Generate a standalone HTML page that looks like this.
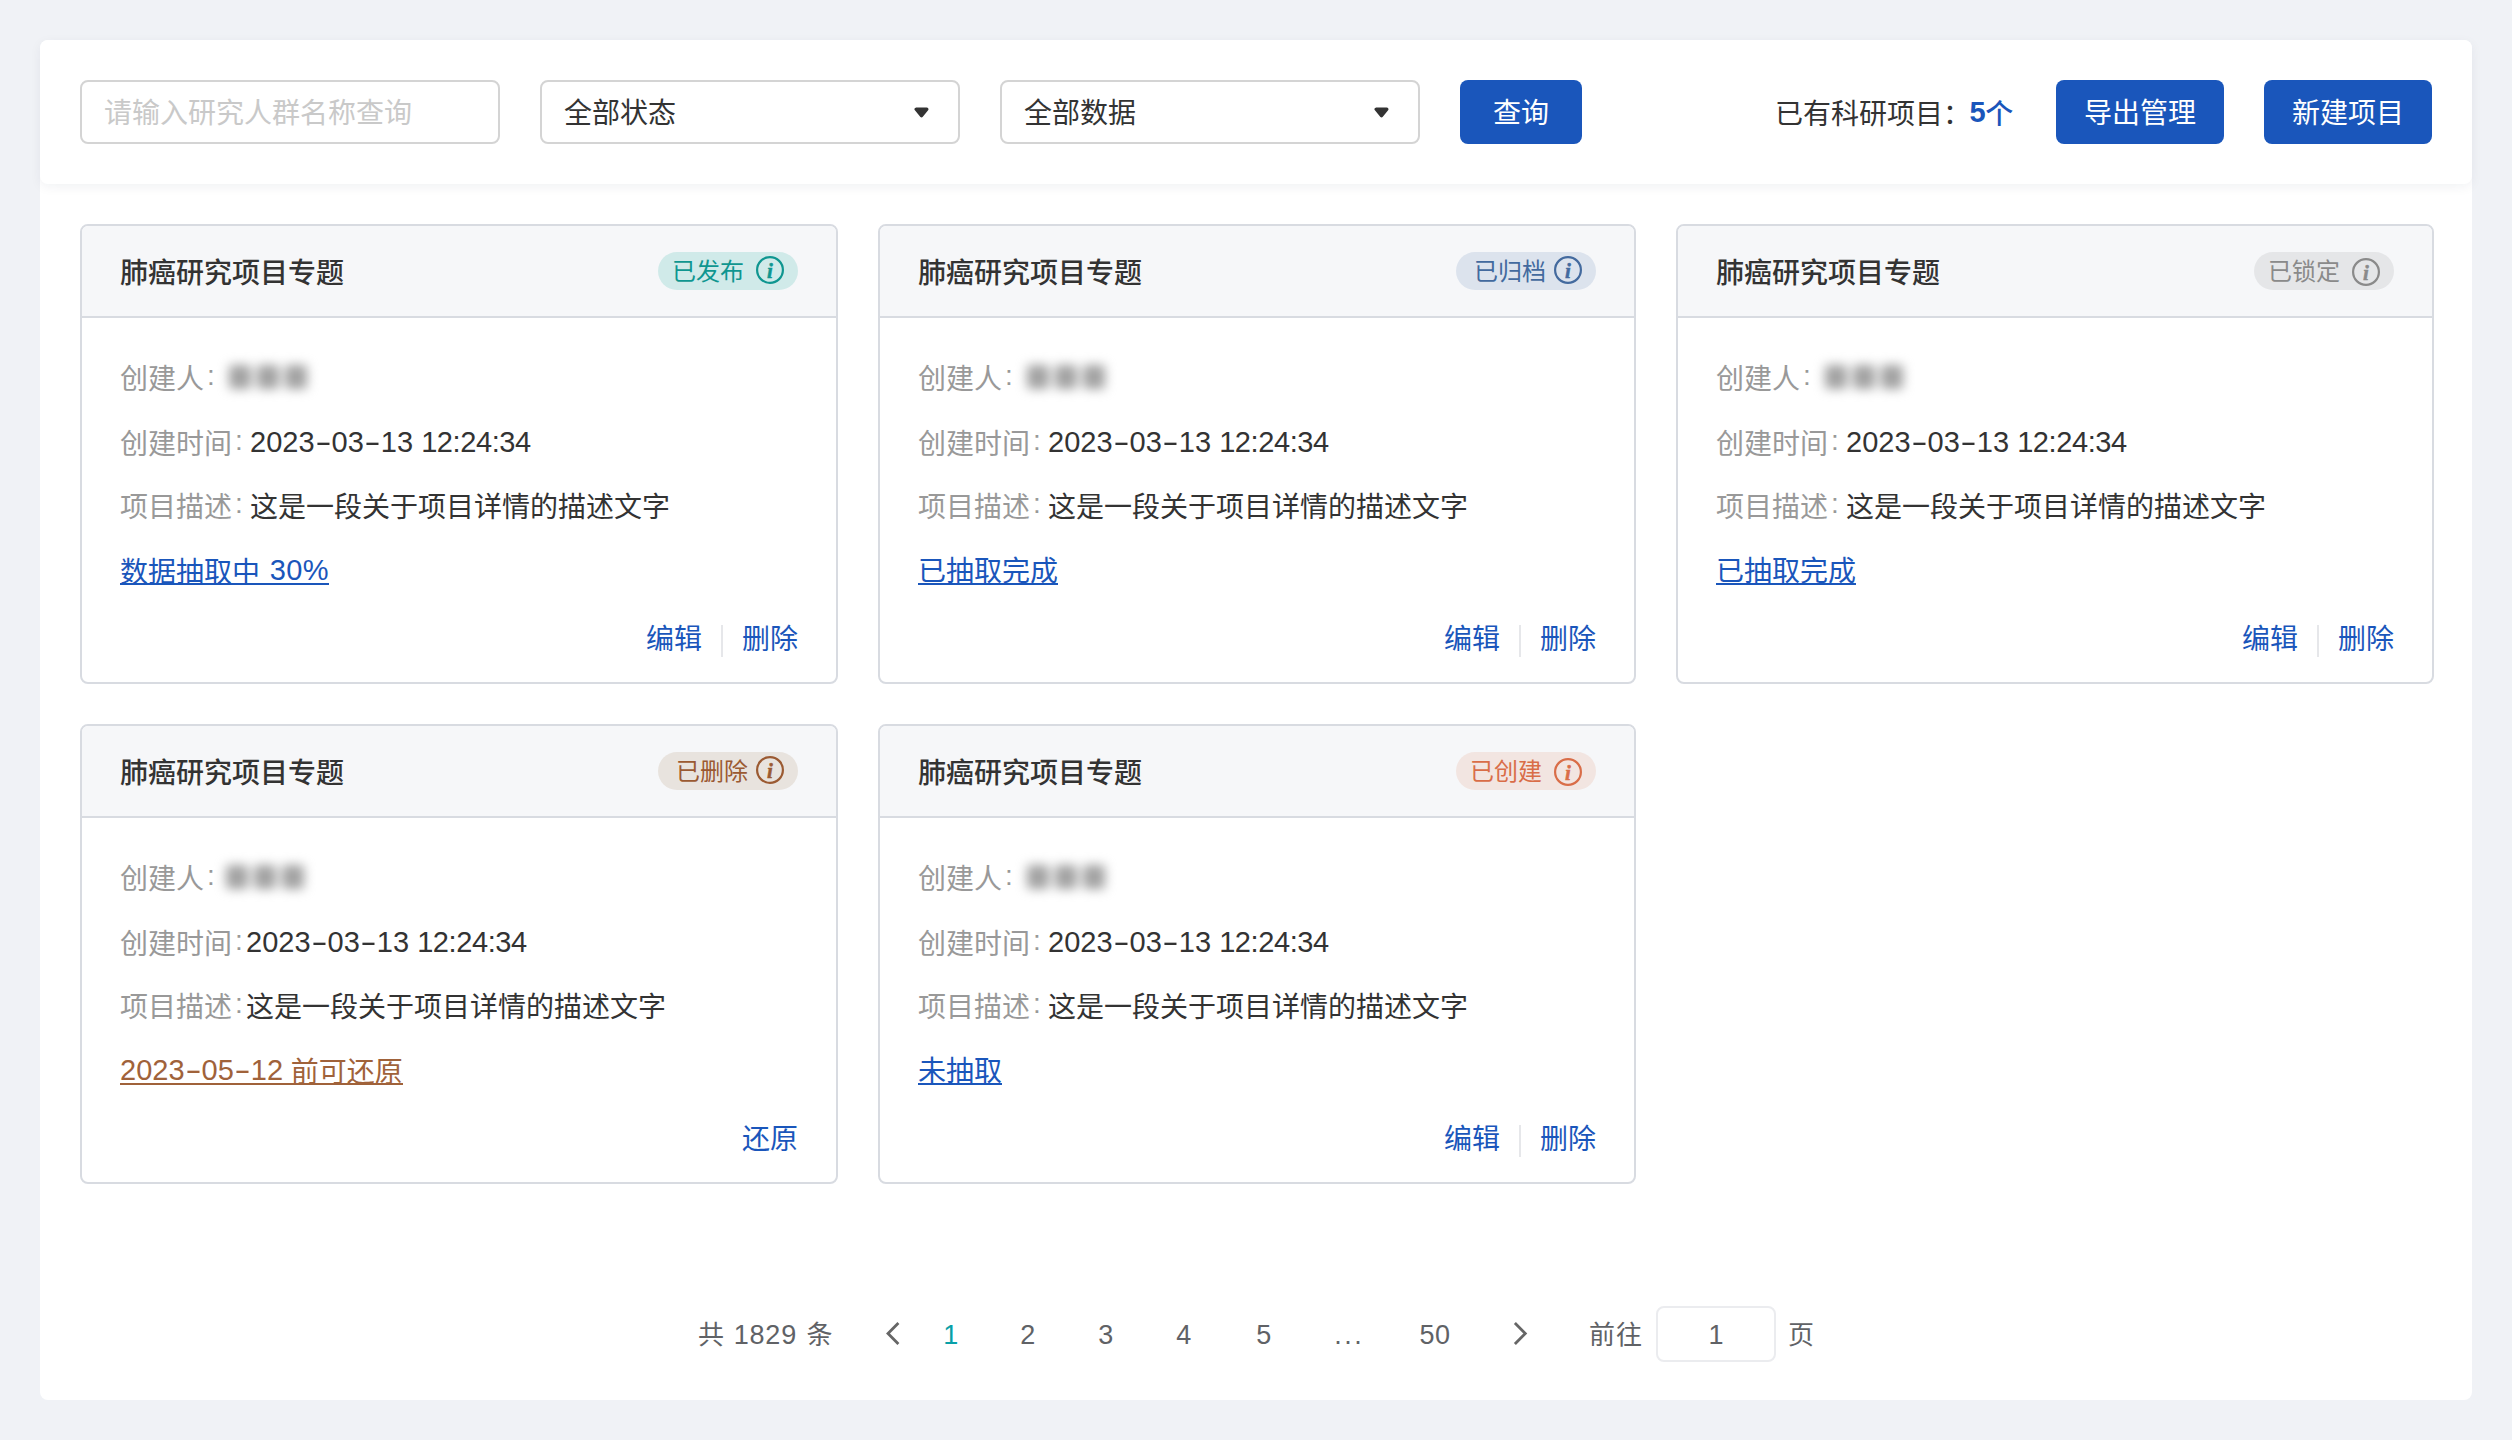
<!DOCTYPE html>
<html lang="zh-CN">
<head>
<meta charset="utf-8">
<title>科研项目</title>
<style>
*{box-sizing:border-box;margin:0;padding:0}
html,body{width:2512px;height:1440px;overflow:hidden}
body{background:#f0f2f6;font-family:"Liberation Sans","Noto Sans CJK SC",sans-serif;font-size:28px;color:#333;position:relative;-webkit-font-smoothing:antialiased}
.panel{position:absolute;left:40px;top:40px;width:2432px;height:1360px;background:#fff;border-radius:8px}
.toolbar{position:absolute;left:40px;top:40px;width:2432px;height:144px;background:#fff;border-radius:8px;box-shadow:0 3px 12px rgba(20,30,60,.06)}
.inp{position:absolute;top:80px;height:64px;width:420px;border:2px solid #d4d4d4;border-radius:8px;background:#fff;line-height:64px;padding-left:22px;font-size:28px;color:#333;white-space:nowrap}
.inp.ph{color:#c9c9c9}
.inp .arr{position:absolute;left:372px;top:25px;width:15px;height:11px}
.btn{position:absolute;top:80px;height:64px;background:#1a56bb;color:#fff;border-radius:8px;font-size:28px;line-height:68px;text-align:center;white-space:nowrap}
.count{position:absolute;top:80px;height:64px;line-height:68px;left:1775px;font-size:28px;color:#333;white-space:nowrap}
.count b{font-weight:500;color:#1a56bb}
.card{position:absolute;width:758px;height:460px;border:2px solid #d8dbe1;border-radius:8px;background:#fff;overflow:hidden}
.card .hd{position:absolute;left:0;top:0;right:0;height:92px;background:#f6f7f9;border-bottom:2px solid #d8dbe1}
.card .tt{position:absolute;left:38px;top:0;height:90px;line-height:96px;font-size:28px;font-weight:500;color:#333;white-space:nowrap}
.badge{position:absolute;right:38px;top:26px;height:38px;width:140px;border-radius:19px;font-size:24px;line-height:40px;padding-left:14px;white-space:nowrap}
.badge svg{position:absolute;right:14px;top:4px;width:28px;height:28px}
.row{position:absolute;left:38px;height:40px;line-height:40px;font-size:28px;white-space:nowrap;color:#333}
.row .lb{color:#999}
.row .lb b{font-weight:400;display:inline-block;width:18px;text-align:left;padding-left:3px;position:relative;top:-4px}
.c4 .row .lb b{width:14px}
.num{font-size:29px;letter-spacing:0;position:relative;top:-2.5px}
.hy{display:inline-block;width:17px;text-align:center;transform:scaleX(1.7);letter-spacing:0}
.r1{top:134px}.r2{top:198px}.r3{top:262px}.r4{top:326px}
.lnk{display:inline-block;height:33px;line-height:40px;color:#1a56bb;border-bottom:2px solid currentColor}
.blur{position:absolute;left:106px;top:3.3px;width:84px;height:28px;filter:blur(5.5px)}
.blur i{position:absolute;top:2px;width:22px;height:24px;background:#a2a2a2;border-radius:3px}
.c4 .blur{left:103px}
.acts{position:absolute;right:38px;top:394px;height:40px;line-height:40px;font-size:28px;color:#1a56bb;white-space:nowrap}
.acts i{display:inline-block;width:2px;height:32px;background:#e6e7ea;vertical-align:middle;margin:0 19px 0 19px;position:relative;top:-1px}
.pg{position:absolute;top:1306px;height:56px;line-height:58px;font-size:26px;color:#606266;white-space:nowrap}
.pc{width:80px;text-align:center;font-size:27px;letter-spacing:.5px}
.pn{font-size:27px;letter-spacing:.8px;margin:0 2.2px 0 2.5px}
.pgin{position:absolute;left:1656px;top:1306px;width:120px;height:56px;border:2px solid #ebecef;border-radius:8px;line-height:54px;text-align:center;font-size:27px;color:#606266}
</style>
</head>
<body>
<div class="panel"></div>
<div class="toolbar"></div>
<div class="inp ph" style="left:80px">请输入研究人群名称查询</div>
<div class="inp" style="left:540px">全部状态<svg class="arr" viewBox="0 0 15 11"><path d="M2.2 2.2 L12.8 2.2 L7.5 8.6 Z" fill="#333" stroke="#333" stroke-width="3.4" stroke-linejoin="round"/></svg></div>
<div class="inp" style="left:1000px">全部数据<svg class="arr" viewBox="0 0 15 11"><path d="M2.2 2.2 L12.8 2.2 L7.5 8.6 Z" fill="#333" stroke="#333" stroke-width="3.4" stroke-linejoin="round"/></svg></div>
<div class="btn" style="left:1460px;width:122px">查询</div>
<div class="count">已有科研项目：<b><span style="font-weight:700;font-size:29px;position:relative;top:-2px;margin-left:-1.5px;letter-spacing:-.5px">5</span>个</b></div>
<div class="btn" style="left:2056px;width:168px">导出管理</div>
<div class="btn" style="left:2264px;width:168px">新建项目</div>

<div class="card" style="left:80px;top:224px">
<div class="hd"><div class="tt">肺癌研究项目专题</div>
<div class="badge" style="color:#0f9690;background:#d0eae9">已发布<svg viewBox="0 0 28 28"><circle cx="14" cy="14" r="12.9" fill="none" stroke="#0f9690" stroke-width="2.2"/><text x="14" y="21.8" text-anchor="middle" font-family="Liberation Serif, serif" font-style="italic" font-weight="bold" font-size="21" stroke-width=".5" stroke="currentColor" fill="#0f9690">i</text></svg></div></div>
<div class="row r1"><span class="lb">创建人<b>:</b></span><span class="blur"><i style="left:3px"></i><i style="left:31px"></i><i style="left:59px"></i></span></div>
<div class="row r2"><span class="lb">创建时间<b>:</b></span><span class="v num">2023<span class="hy">-</span>03<span class="hy">-</span>13 <span style="letter-spacing:-.4px">12:24:34</span></span></div>
<div class="row r3"><span class="lb">项目描述<b>:</b></span><span class="v">这是一段关于项目详情的描述文字</span></div>
<div class="row r4"><span class="lnk">数据抽取中 <span class="num" style="letter-spacing:.4px;margin-left:2px">30%</span></span></div>
<div class="acts">编辑<i></i>删除</div>
</div>
<div class="card" style="left:878px;top:224px">
<div class="hd"><div class="tt">肺癌研究项目专题</div>
<div class="badge" style="color:#436a9e;background:#dce3ed;padding-left:18px">已归档<svg viewBox="0 0 28 28"><circle cx="14" cy="14" r="12.9" fill="none" stroke="#436a9e" stroke-width="2.2"/><text x="14" y="21.8" text-anchor="middle" font-family="Liberation Serif, serif" font-style="italic" font-weight="bold" font-size="21" stroke-width=".5" stroke="currentColor" fill="#436a9e">i</text></svg></div></div>
<div class="row r1"><span class="lb">创建人<b>:</b></span><span class="blur"><i style="left:3px"></i><i style="left:31px"></i><i style="left:59px"></i></span></div>
<div class="row r2"><span class="lb">创建时间<b>:</b></span><span class="v num">2023<span class="hy">-</span>03<span class="hy">-</span>13 <span style="letter-spacing:-.4px">12:24:34</span></span></div>
<div class="row r3"><span class="lb">项目描述<b>:</b></span><span class="v">这是一段关于项目详情的描述文字</span></div>
<div class="row r4"><span class="lnk">已抽取完成</span></div>
<div class="acts">编辑<i></i>删除</div>
</div>
<div class="card" style="left:1676px;top:224px">
<div class="hd"><div class="tt">肺癌研究项目专题</div>
<div class="badge" style="color:#8a8a8a;background:#e5e6e8">已锁定<svg style="top:6px" viewBox="0 0 28 28"><circle cx="14" cy="14" r="12.9" fill="none" stroke="#8a8a8a" stroke-width="2.2"/><text x="14" y="21.8" text-anchor="middle" font-family="Liberation Serif, serif" font-style="italic" font-weight="bold" font-size="21" stroke-width=".5" stroke="currentColor" fill="#8a8a8a">i</text></svg></div></div>
<div class="row r1"><span class="lb">创建人<b>:</b></span><span class="blur"><i style="left:3px"></i><i style="left:31px"></i><i style="left:59px"></i></span></div>
<div class="row r2"><span class="lb">创建时间<b>:</b></span><span class="v num">2023<span class="hy">-</span>03<span class="hy">-</span>13 <span style="letter-spacing:-.4px">12:24:34</span></span></div>
<div class="row r3"><span class="lb">项目描述<b>:</b></span><span class="v">这是一段关于项目详情的描述文字</span></div>
<div class="row r4"><span class="lnk">已抽取完成</span></div>
<div class="acts">编辑<i></i>删除</div>
</div>
<div class="card c4" style="left:80px;top:724px">
<div class="hd"><div class="tt">肺癌研究项目专题</div>
<div class="badge" style="color:#9b5a32;background:#e8e3de;padding-left:18px">已删除<svg viewBox="0 0 28 28"><circle cx="14" cy="14" r="12.9" fill="none" stroke="#9b5a32" stroke-width="2.2"/><text x="14" y="21.8" text-anchor="middle" font-family="Liberation Serif, serif" font-style="italic" font-weight="bold" font-size="21" stroke-width=".5" stroke="currentColor" fill="#9b5a32">i</text></svg></div></div>
<div class="row r1"><span class="lb">创建人<b>:</b></span><span class="blur"><i style="left:3px"></i><i style="left:31px"></i><i style="left:59px"></i></span></div>
<div class="row r2"><span class="lb">创建时间<b>:</b></span><span class="v num">2023<span class="hy">-</span>03<span class="hy">-</span>13 <span style="letter-spacing:-.4px">12:24:34</span></span></div>
<div class="row r3"><span class="lb">项目描述<b>:</b></span><span class="v">这是一段关于项目详情的描述文字</span></div>
<div class="row r4"><span class="lnk" style="color:#a0623a"><span class="num">2023<span class="hy">-</span>05<span class="hy">-</span>12</span> 前可还原</span></div>
<div class="acts">还原</div>
</div>
<div class="card" style="left:878px;top:724px">
<div class="hd"><div class="tt">肺癌研究项目专题</div>
<div class="badge" style="color:#d96d48;background:#f2e5e1">已创建<svg style="top:6px" viewBox="0 0 28 28"><circle cx="14" cy="14" r="12.9" fill="none" stroke="#d96d48" stroke-width="2.2"/><text x="14" y="21.8" text-anchor="middle" font-family="Liberation Serif, serif" font-style="italic" font-weight="bold" font-size="21" stroke-width=".5" stroke="currentColor" fill="#d96d48">i</text></svg></div></div>
<div class="row r1"><span class="lb">创建人<b>:</b></span><span class="blur"><i style="left:3px"></i><i style="left:31px"></i><i style="left:59px"></i></span></div>
<div class="row r2"><span class="lb">创建时间<b>:</b></span><span class="v num">2023<span class="hy">-</span>03<span class="hy">-</span>13 <span style="letter-spacing:-.4px">12:24:34</span></span></div>
<div class="row r3"><span class="lb">项目描述<b>:</b></span><span class="v">这是一段关于项目详情的描述文字</span></div>
<div class="row r4"><span class="lnk">未抽取</span></div>
<div class="acts">编辑<i></i>删除</div>
</div>
<div class="pg" style="left:698px">共 <span class="pn">1829</span> 条</div>
<svg style="position:absolute;left:884px;top:1320px" width="20" height="28" viewBox="0 0 20 28"><path d="M14.4 2.9 L4 13.45 L14.4 24" fill="none" stroke="#666" stroke-width="2.8"/></svg>
<div class="pg pc" style="left:911px;color:#08a0a8">1</div>
<div class="pg pc" style="left:988px">2</div>
<div class="pg pc" style="left:1066px">3</div>
<div class="pg pc" style="left:1144px">4</div>
<div class="pg pc" style="left:1224px">5</div>
<div class="pg pc" style="left:1308px;letter-spacing:2.4px;text-indent:2.4px">...</div>
<div class="pg pc" style="left:1395px">50</div>
<svg style="position:absolute;left:1510px;top:1320px" width="20" height="28" viewBox="0 0 20 28"><path d="M4.9 2.9 L15.3 13.45 L4.9 24" fill="none" stroke="#666" stroke-width="2.8"/></svg>
<div class="pg" style="left:1589px;letter-spacing:1px">前往</div>
<div class="pgin">1</div>
<div class="pg" style="left:1788px">页</div>
</body>
</html>
